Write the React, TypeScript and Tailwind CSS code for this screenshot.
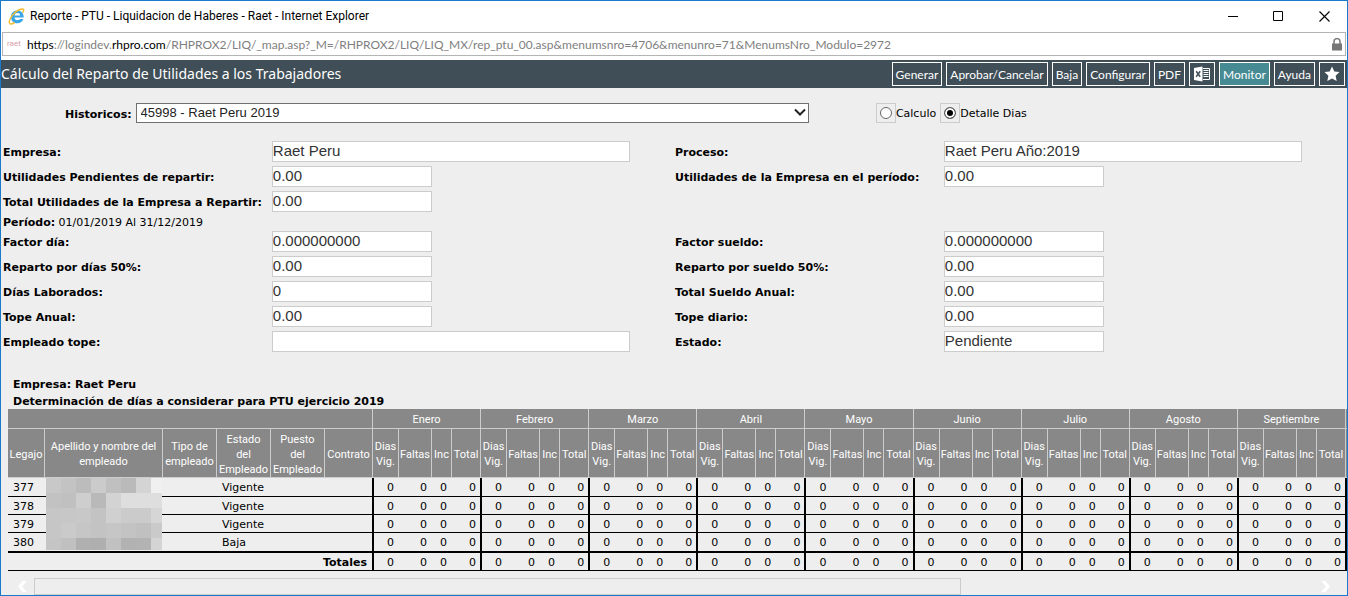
import React from "react";

const MONTHS = ["Enero", "Febrero", "Marzo", "Abril", "Mayo", "Junio", "Julio", "Agosto", "Septiembre"];

const EMPLOYEES = [
  { id: "377", status: "Vigente", height: "h-[19px]" },
  { id: "378", status: "Vigente", height: "h-[18px]" },
  { id: "379", status: "Vigente", height: "h-[18px]" },
  { id: "380", status: "Baja", height: "h-[20px]" },
];

const MOSAIC = [
  ["#c8c8c8", "#c3c3c3", "#bcbcbc", "#cbcbcb", "#c0c0c0", "#bababa", "#d4d4d4", "#f0f0f0"],
  ["#c2c2c2", "#c0c0c0", "#cecece", "#b9b9b9", "#d3d3d3", "#dedede", "#dedede", "#dedede"],
  ["#c6c6c6", "#c7c7c7", "#c8c8c8", "#c3c3c3", "#d0d0d0", "#cbcbcb", "#cbcbcb", "#d6d6d6"],
  ["#c6c6c6", "#cacaca", "#c6c6c6", "#c3c3c3", "#c6c6c6", "#c3c3c3", "#c0c0c0", "#cacaca"],
  ["#c5c5c5", "#c0c0c0", "#b0b0b0", "#afafaf", "#c1c1c1", "#b2b2b2", "#b3b3b3", "#d4d4d4"],
];

function IeLogo() {
  return (
    <svg width="18" height="17" viewBox="0 0 18 17" aria-hidden="true">
      <path
        d="M9.300 2.600 C13.200 2.600 15.700 5.300 15.700 9.600 H6.500 C6.700 11.400 7.800 12.300 9.500 12.300 C10.700 12.300 11.500 11.900 12 11.100 H15.400 C14.500 13.800 12.400 15.300 9.300 15.300 C5.500 15.300 3 12.800 3 9 C3 5.200 5.500 2.600 9.300 2.600 Z M6.600 7.500 H12.200 C12 5.900 11 5.100 9.500 5.100 C7.900 5.100 6.900 5.900 6.600 7.500 Z"
        fill="#38a5e6"
        fillRule="evenodd"
      />
      <path
        d="M14.600 4.800 C16 2.600 16.200 1 14.600 0.900 C12 0.800 7.400 3.300 4.200 7.600 C1.200 11.600 0.500 15 2.200 15.800 C3.300 16.200 4.900 15.600 6.600 14.500"
        fill="none"
        stroke="#f0bd35"
        strokeWidth="1.500"
      />
    </svg>
  );
}

function ExcelIcon() {
  return (
    <svg width="18" height="16" viewBox="0 0 18 16" aria-hidden="true">
      <path d="M1 2 L9.500 0.500 V15.500 L1 14 Z" fill="#fff" />
      <path d="M3.200 5.200 L7.200 10.800 M7.200 5.200 L3.200 10.800" stroke="#404e57" strokeWidth="1.500" />
      <path d="M10 2.500 H16.500 V13.500 H10" fill="none" stroke="#fff" strokeWidth="1" />
      <path d="M10.500 4.500h5M10.500 6.500h5M10.500 8.500h5M10.500 10.500h5" stroke="#fff" strokeWidth="1" />
    </svg>
  );
}

function ToolButton({ children, label, active }: { children: React.ReactNode; label?: string; active?: boolean }) {
  return (
    <button
      type="button"
      aria-label={label}
      className={
        "flex h-6 items-center justify-center border border-white px-[3px] font-['Lato','Noto_Sans',sans-serif] text-[12px] leading-4 text-white " +
        (active ? "bg-[#468a94]" : "")
      }
    >
      {label ? children : <span className="pt-[2px]">{children}</span>}
    </button>
  );
}

function Field({ id, label, value, wide }: { id: string; label: string; value: string; wide?: boolean }) {
  return (
    <>
      <label htmlFor={id} className="flex h-[21px] items-center pt-[2px] font-bold whitespace-nowrap">
        {label}
      </label>
      <input
        id={id}
        readOnly
        defaultValue={value}
        className={
          "h-[21px] max-w-full border border-[#cccccc] bg-white pb-[2px] font-['Liberation_Sans',Arial,sans-serif] text-[15px] leading-4 text-[#333333] " +
          (wide ? "w-[358px]" : "w-40")
        }
      />
    </>
  );
}

function RadioOption({ label, checked }: { label: string; checked?: boolean }) {
  return (
    <label className="flex items-center">
      <span className="flex h-5 w-5 items-center justify-center border border-[#cccccc]">
        <input
          type="radio"
          name="vista"
          defaultChecked={checked}
          className="m-0 h-3 w-3 appearance-none rounded-full border border-[#666666] bg-white checked:bg-black checked:shadow-[inset_0_0_0_2px_white]"
        />
      </span>
      <span className="pt-[2px]">{label}</span>
    </label>
  );
}

const headCell = "border-b border-l border-[#cccccc] p-0 pt-[2px] font-normal first:border-l-0";
const numCell = " p-0 pt-[2px] pr-1 text-right";

export default function App() {
  return (
    <div className="flex min-h-screen flex-col overflow-hidden border border-[#1979ca] bg-[#eeeeee] font-['DejaVu_Sans',Verdana,sans-serif] text-[11px] leading-[14px] text-black">
      <div className="bg-white pb-1 font-['Roboto','Noto_Sans',sans-serif] text-[12px] leading-4">
        <div className="flex h-[31px] items-center pb-px pl-[7px]">
          <IeLogo />
          <h1 className="ml-1 grow">Reporte - PTU - Liquidacion de Haberes - Raet - Internet Explorer</h1>
          <button type="button" aria-label="Minimizar" className="flex h-full w-[45px] items-center justify-center">
            <svg width="11" height="11" viewBox="0 0 11 11"><path d="M0 5.500h10" stroke="#000" /></svg>
          </button>
          <button type="button" aria-label="Maximizar" className="flex h-full w-[45px] items-center justify-center">
            <svg width="11" height="11" viewBox="0 0 11 11"><path d="M.5 .5h9v9h-9z" fill="none" stroke="#000" /></svg>
          </button>
          <button type="button" aria-label="Cerrar" className="flex h-full w-[46px] items-center justify-center">
            <svg width="11" height="11" viewBox="0 0 11 11"><path d="M.5 .5l10 10M10.500 .5l-10 10" fill="none" stroke="#000" strokeWidth="1.100" /></svg>
          </button>
        </div>
        <div className="mx-px flex h-6 items-center border border-[#b4b4b4] pr-[3px] pl-1">
          <span className="w-5 text-[8px] text-[#d9a0a8]">raet</span>
          <span className="grow pt-px font-['Lato','Noto_Sans',sans-serif] text-[12px] text-[#808080]">
            <span className="text-black">https</span>://logindev.<span className="text-black">rhpro.com</span>
            /RHPROX2/LIQ/_map.asp?_M=/RHPROX2/LIQ/LIQ_MX/rep_ptu_00.asp&amp;menumsnro=4706&amp;menunro=71&amp;MenumsNro_Modulo=2972
          </span>
          <svg width="10" height="13" viewBox="0 0 10 13" aria-hidden="true">
            <path d="M2 6V3.600a3 3 0 0 1 6 0V6" fill="none" stroke="#777" strokeWidth="1.500" />
            <rect x="0" y="5.500" width="10" height="7" fill="#777" />
          </svg>
        </div>
      </div>

      <header className="flex h-7 items-center gap-1 bg-[#404e57] pr-[2px] text-white">
        <h2 className="grow font-['Noto_Sans','Open_Sans',sans-serif] text-[14px] leading-4">Cálculo del Reparto de Utilidades a los Trabajadores</h2>
        <ToolButton>Generar</ToolButton>
        <ToolButton>Aprobar/Cancelar</ToolButton>
        <ToolButton>Baja</ToolButton>
        <ToolButton>Configurar</ToolButton>
        <ToolButton>PDF</ToolButton>
        <ToolButton label="Excel"><ExcelIcon /></ToolButton>
        <ToolButton active>Monitor</ToolButton>
        <ToolButton>Ayuda</ToolButton>
        <ToolButton label="Favoritos">
          <svg width="18" height="16" viewBox="0 0 18 16" aria-hidden="true">
            <path d="M9 .5l2.300 5 5.200.6-3.900 3.600 1.100 5.300L9 12.400 4.300 15l1.100-5.300L1.500 6.100l5.200-.6z" fill="#fff" />
          </svg>
        </ToolButton>
      </header>

      <main>
        <div className="mt-[15px] flex items-center">
          <label htmlFor="historicos" className="w-[10%] pt-[3px] pr-1 text-right font-bold">Historicos:</label>
          <div className="relative w-1/2">
            <select
              id="historicos"
              className="block h-5 w-full appearance-none border border-[#707070] bg-white px-1 font-['Liberation_Sans',Arial,sans-serif] text-[13px] leading-4 text-[#222222]"
            >
              <option>45998 - Raet Peru 2019</option>
            </select>
            <svg className="pointer-events-none absolute top-[5px] right-[3px]" width="12" height="9" viewBox="0 0 12 9" aria-hidden="true">
              <path d="M1 1.500l5 5 5-5" fill="none" stroke="#222" strokeWidth="2" />
            </svg>
          </div>
          <div className="ml-[5%] flex gap-1">
            <RadioOption label="Calculo" />
            <RadioOption label="Detalle Dias" checked />
          </div>
        </div>

        <div className="mt-[18px] grid grid-cols-[2fr_3fr_2fr_3fr] gap-y-1 pl-[2px]">
          <Field id="empresa" label="Empresa:" value="Raet Peru" wide />
          <Field id="proceso" label="Proceso:" value="Raet Peru Año:2019" wide />
          <Field id="pendientes" label="Utilidades Pendientes de repartir:" value="0.00" />
          <Field id="utilidades" label="Utilidades de la Empresa en el período:" value="0.00" />
          <Field id="total" label="Total Utilidades de la Empresa a Repartir:" value="0.00" />
          <p className="col-span-4 h-[11px] leading-[13px]"><b>Período:</b> 01/01/2019 Al 31/12/2019</p>
          <Field id="factor-dia" label="Factor día:" value="0.000000000" />
          <Field id="factor-sueldo" label="Factor sueldo:" value="0.000000000" />
          <Field id="reparto-dias" label="Reparto por días 50%:" value="0.00" />
          <Field id="reparto-sueldo" label="Reparto por sueldo 50%:" value="0.00" />
          <Field id="dias" label="Días Laborados:" value="0" />
          <Field id="sueldo-anual" label="Total Sueldo Anual:" value="0.00" />
          <Field id="tope-anual" label="Tope Anual:" value="0.00" />
          <Field id="tope-diario" label="Tope diario:" value="0.00" />
          <Field id="empleado-tope" label="Empleado tope:" value="" wide />
          <Field id="estado" label="Estado:" value="Pendiente" />
        </div>

        <div className="mt-6 h-[33px] pl-3 leading-[17px] font-bold">
          <p>Empresa: Raet Peru</p>
          <p>Determinación de días a considerar para PTU ejercicio 2019</p>
        </div>

        <div className="overflow-hidden pl-[7px]">
          <table className="w-full table-fixed border-separate border-spacing-0">
            <colgroup>
              <col className="w-9" />
              <col className="w-[118px]" />
              <col className="w-[54px]" />
              <col className="w-[54px]" />
              <col className="w-[54px]" />
              <col className="w-12" />
              {MONTHS.map((m) => (
                <React.Fragment key={m}>
                  <col className="w-[26px]" />
                  <col className="w-[33px]" />
                  <col className="w-5" />
                  <col />
                </React.Fragment>
              ))}
              <col className="w-[2px]" />
            </colgroup>
            <thead className="bg-[#888888] font-['Roboto','Noto_Sans',sans-serif] text-[11px] leading-[15px] text-white">
              <tr className="h-5">
                <th colSpan={6} className={headCell} />
                {MONTHS.map((m) => (
                  <th key={m} colSpan={4} className={headCell}>{m}</th>
                ))}
                <th className={headCell} />
              </tr>
              <tr className="h-[49px]">
                <th className={headCell}>Legajo</th>
                <th className={headCell}>Apellido y nombre del empleado</th>
                <th className={headCell}>Tipo de empleado</th>
                <th className={headCell}>Estado<br />del<br />Empleado</th>
                <th className={headCell}>Puesto<br />del<br />Empleado</th>
                <th className={headCell}>Contrato</th>
                {MONTHS.map((m) => (
                  <React.Fragment key={m}>
                    <th className={headCell}>Dias Vig.</th>
                    <th className={headCell}>Faltas</th>
                    <th className={headCell}>Inc</th>
                    <th className={headCell}>Total</th>
                  </React.Fragment>
                ))}
                <th className={headCell} />
              </tr>
            </thead>
            <tbody>
              {EMPLOYEES.map((e, i) => {
                const line = i === 3 ? "border-b-2 border-black" : "border-b border-black";
                return (
                  <tr key={e.id} className={e.height}>
                    <td className={line + " p-0 pt-[2px] pl-[5px]"}>{e.id}</td>
                    <td className={line + " relative p-0"}>
                      {i === 0 && (
                        <svg className="absolute top-0 left-[2px] z-10" width="116" height="72" viewBox="0 0 116 72" shapeRendering="crispEdges" aria-hidden="true">
                          {MOSAIC.map((row, y) =>
                            row.map((fill, x) => (
                              <rect key={x + "-" + y} x={x * 15} y={y * 15} width="15" height="15" fill={fill} />
                            ))
                          )}
                        </svg>
                      )}
                    </td>
                    <td className={line + " p-0"} />
                    <td className={line + " p-0 pt-[2px] pl-[6px]"}>{e.status}</td>
                    <td className={line + " p-0"} />
                    <td className={line + " p-0"} />
                    {MONTHS.map((m) => (
                      <React.Fragment key={m}>
                        <td className={line + " border-l-2" + numCell}>0</td>
                        <td className={line + numCell}>0</td>
                        <td className={line + numCell}>0</td>
                        <td className={line + numCell}>0</td>
                      </React.Fragment>
                    ))}
                    <td className={line + " border-l-2 p-0"} />
                  </tr>
                );
              })}
              <tr className="h-[18px]">
                <td colSpan={6} className="border-b border-black p-0 pt-[2px] pr-[5px] text-right font-bold">Totales</td>
                {MONTHS.map((m) => (
                  <React.Fragment key={m}>
                    <td className={"border-b border-l-2 border-black" + numCell}>0</td>
                    <td className={"border-b border-black" + numCell}>0</td>
                    <td className={"border-b border-black" + numCell}>0</td>
                    <td className={"border-b border-black" + numCell}>0</td>
                  </React.Fragment>
                ))}
                <td className="border-b border-l-2 border-black p-0" />
              </tr>
            </tbody>
          </table>
        </div>

        <div className="mt-[7px] flex h-[17px] items-center">
          <button type="button" aria-label="Desplazar a la izquierda" className="flex w-[33px] justify-center pl-[10px]">
            <svg width="9" height="11" viewBox="0 0 9 11"><path d="M4.500 0H9L4 5.500 9 11H4.500L0 5.500z" fill="#fff" /></svg>
          </button>
          <div className="h-full grow">
            <div className="h-full w-[72%] border border-[#cccccc]" />
          </div>
          <button type="button" aria-label="Desplazar a la derecha" className="flex w-[26px] justify-start">
            <svg width="9" height="11" viewBox="0 0 9 11"><path d="M4.500 0H0L5 5.500 0 11h4.500L9 5.500z" fill="#fff" /></svg>
          </button>
        </div>
      </main>
    </div>
  );
}
